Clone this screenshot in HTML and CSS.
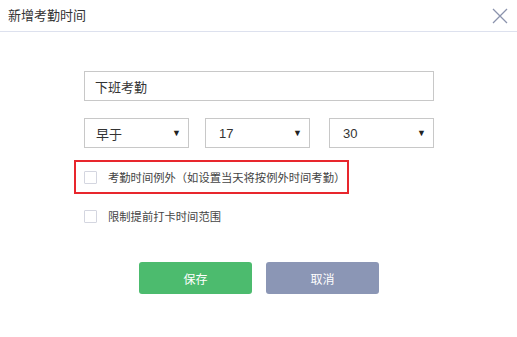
FILE: index.html
```html
<!DOCTYPE html>
<html lang="zh-CN">
<head>
    <meta charset="UTF-8">
    <title>新增考勤时间</title>
    <link rel="stylesheet" href="styles.css">
</head>
<body>
    <div class="dialog">
        <div class="dialog-header">
            <span class="dialog-title">新增考勤时间</span>
            <svg class="close" width="16" height="16" viewBox="0 0 16 16">
                <path d="M1 1 L15 15 M15 1 L1 15" stroke="#8b93ad" stroke-width="1.3" fill="none"/>
            </svg>
        </div>
        <div class="dialog-body">
            <input type="text" class="name-input" value="下班考勤">
            <div class="select-row">
                <div class="select"><span>早于</span><span class="arrow">▼</span></div>
                <div class="select"><span>17</span><span class="arrow">▼</span></div>
                <div class="select"><span>30</span><span class="arrow">▼</span></div>
            </div>
            <div class="check-row highlight">
                <span class="checkbox"></span>
                <span>考勤时间例外（如设置当天将按例外时间考勤）</span>
            </div>
            <div class="check-row">
                <span class="checkbox"></span>
                <span>限制提前打卡时间范围</span>
            </div>
            <div class="actions">
                <button class="btn btn-save">保存</button>
                <button class="btn btn-cancel">取消</button>
            </div>
        </div>
    </div>
</body>
</html>
```

FILE: styles.css
```css
body {
    margin: 0;
    font-family: "Microsoft YaHei", "Noto Sans CJK SC", sans-serif;
    background: #fff;
    color: #333;
}
.dialog {
    width: 517px;
    height: 337px;
}
.dialog-header {
    height: 31px;
    border-bottom: 1px solid #dde1ee;
    display: flex;
    align-items: center;
    justify-content: space-between;
    padding: 0 9px 0 8px;
}
.dialog-title {
    font-size: 13px;
    color: #333;
    margin-top: -2px;
}
.close {
    margin-top: 1px;
}
.dialog-body {
    padding: 39px 0 0 84px;
}
.name-input {
    display: block;
    width: 350px;
    height: 30px;
    box-sizing: border-box;
    border: 1px solid #c8c8c8;
    padding: 0 10px;
    font-family: inherit;
    font-size: 13px;
    color: #333;
    outline: none;
}
.select-row {
    display: flex;
    gap: 16px;
    margin-top: 17px;
    width: 350px;
}
.select {
    flex: 0 0 105px;
    height: 30px;
    box-sizing: border-box;
    border: 1px solid #c8c8c8;
    display: flex;
    align-items: center;
    justify-content: space-between;
    padding: 0 7px 0 11px;
    font-size: 13px;
    font-family: "Liberation Sans", "Noto Sans CJK SC", sans-serif;
}
.select + .select {
    padding-left: 13px;
}
.select:last-child {
    margin-left: 3px;
}
.arrow {
    font-size: 9px;
    color: #222;
}
.check-row {
    display: flex;
    align-items: center;
    gap: 11px;
    font-size: 11.3px;
    color: #444;
    height: 34px;
    box-sizing: border-box;
    white-space: nowrap;
}
.check-row.highlight {
    margin: 12px 0 0 -10px;
    width: 275px;
    border: 2px solid #e8262d;
    padding-left: 8px;
}
.check-row + .check-row {
    margin-top: 5px;
}
.checkbox {
    width: 11px;
    height: 11px;
    border: 1px solid #d4d6e0;
    border-radius: 1px;
    background: #fff;
}
.actions {
    display: flex;
    gap: 14px;
    margin: 29px 0 0 55px;
}
.btn {
    width: 113px;
    height: 32px;
    border: none;
    border-radius: 3px;
    color: #fff;
    font-family: inherit;
    font-size: 12px;
    cursor: pointer;
}
.btn-save {
    background: #4cbb6e;
}
.btn-cancel {
    background: #8b96b5;
}
```
